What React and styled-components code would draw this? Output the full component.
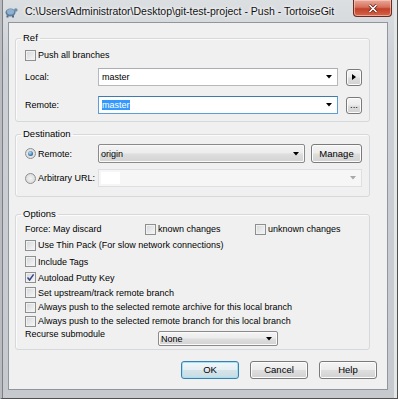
import React from "react";
import styled, { createGlobalStyle } from "styled-components";

const GlobalStyle = createGlobalStyle`
  html, body {
    margin: 0;
    padding: 0;
    background: #ffffff;
  }
  body {
    width: 398px;
    height: 399px;
    overflow: hidden;
  }
`;

const UI_FONT = `"Liberation Sans", Arial, sans-serif`;

const Window = styled.div`
  width: 398px;
  height: 399px;
  box-sizing: border-box;
  display: flex;
  flex-direction: column;
  background: linear-gradient(#dcdfe2, #cdd1d5 60px, #c6cacf);
  border-left: 2px solid #b8bcc0;
  border-right: 1px solid #505050;
  border-bottom: 1px solid #505050;
  box-shadow: inset 1px 0 0 #7d7f82, inset -3px 0 0 #e3e5e7;
  font-family: ${UI_FONT};
  font-size: 9px;
  color: #000;
`;

const TitleBar = styled.div`
  height: 22px;
  flex: none;
  display: flex;
  align-items: flex-start;
`;

const TitleIcon = styled.svg`
  margin: 5px 0 0 2px;
  flex: none;
`;

const TitleText = styled.div`
  margin: 4px 0 0 7px;
  font-size: 10.5px;
  line-height: 14px;
  color: #111;
  white-space: nowrap;
  text-shadow: 0 0 5px #ffffff, 0 0 3px #ffffff;
`;

const CloseButton = styled.div`
  margin-left: auto;
  margin-right: 5px;
  width: 39px;
  height: 17px;
  box-sizing: border-box;
  border: 1px solid #6b2b20;
  border-top: none;
  border-radius: 0 0 4px 4px;
  background: linear-gradient(#e9a99a 0%, #d7705b 45%, #c2402a 55%, #d5664a 100%);
  box-shadow: inset 0 0 0 1px rgba(255, 210, 200, 0.6);
  display: flex;
  align-items: center;
  justify-content: center;
`;

const Client = styled.div`
  flex: 1;
  margin: 0 9px 8px 6px;
  box-sizing: border-box;
  border: 1px solid #8f969c;
  background: #f0f0f0;
  padding: 9px 10px 0 6px;
  display: flex;
  flex-direction: column;
`;

const Group = styled.fieldset`
  margin: ${(p) => p.$mt}px 7px 0 0;
  padding: 0 7px ${(p) => p.$pb}px 9px;
  border: 1px solid #d5d9dc;
  border-radius: 3px;
  box-shadow: inset 1px 1px 0 #fbfbfb;
  min-width: 0;
`;

const Legend = styled.legend`
  padding: 0 2px;
  margin-left: -4px;
  line-height: 12px;
  font-size: 9.5px;
`;

const Row = styled.div`
  display: grid;
  grid-template-columns: ${(p) => p.$cols};
  column-gap: ${(p) => p.$gap || 0}px;
  align-items: center;
  height: ${(p) => p.$h}px;
  margin-top: ${(p) => p.$mt || 0}px;
`;

const FieldLabel = styled.span`
  line-height: 12px;
  white-space: nowrap;
  align-self: ${(p) => (p.$top ? "start" : "center")};
`;

const Option = styled.label`
  display: flex;
  align-items: center;
  gap: 2px;
  line-height: 12px;
  white-space: nowrap;
`;

const CheckBox = styled.span`
  width: 11px;
  height: 11px;
  box-sizing: border-box;
  flex: none;
  border: 1px solid #8e8f8f;
  background: linear-gradient(135deg, #d4d6d8, #f7f7f7);
  box-shadow: inset 0 0 0 1px #f1f1f1;
  display: inline-flex;
  align-items: center;
  justify-content: center;
`;

const RadioDot = styled.span`
  width: 11px;
  height: 11px;
  box-sizing: border-box;
  flex: none;
  border-radius: 50%;
  border: 1px solid #8e8f8f;
  background: radial-gradient(circle at 50% 50%, #f3f3f3, #d3d4d6);
  display: inline-flex;
  align-items: center;
  justify-content: center;

  &::after {
    content: "";
    display: ${(p) => (p.$on ? "block" : "none")};
    width: 5px;
    height: 5px;
    border-radius: 50%;
    background: radial-gradient(circle at 40% 35%, #b9e1f8, #2a6aa3 70%, #1b4a78);
  }
`;

const EditCombo = styled.div`
  height: 100%;
  box-sizing: border-box;
  display: flex;
  align-items: center;
  padding: 0 5px 0 3px;
  border: 1px solid ${(p) => (p.$focus ? "#5b9fd6" : "#b5b8bd")};
  border-top-color: ${(p) => (p.$focus ? "#3d7bad" : "#abadb3")};
  background: #ffffff;
`;

const ComboText = styled.span`
  flex: 1;
  line-height: 12px;
`;

const Selected = styled.span`
  background: #3399ff;
  color: #ffffff;
`;

const DropCombo = styled.div`
  height: ${(p) => (p.$h ? `${p.$h}px` : "100%")};
  align-self: ${(p) => (p.$h ? "end" : "stretch")};
  box-sizing: border-box;
  display: flex;
  align-items: center;
  padding: 0 5px 0 2px;
  border: 1px solid #8a8a8a;
  border-radius: 2px;
  background: linear-gradient(#f4f4f4 0%, #ececec 48%, #dedede 52%, #d3d3d3 100%);
  box-shadow: inset 0 0 0 1px #fafafa;
`;

const DisabledCombo = styled.div`
  height: 100%;
  box-sizing: border-box;
  display: flex;
  align-items: center;
  padding: 0 5px 0 2px;
  border: 1px solid #dcdfe3;
  background: #f6f6f6;
`;

const DisabledEdit = styled.span`
  width: 19px;
  height: 12px;
  background: #ffffff;
  margin-right: auto;
`;

const PushButton = styled.button`
  font: inherit;
  font-size: 9.5px;
  color: #000;
  width: ${(p) => p.$w || 58}px;
  height: ${(p) => p.$h || 18}px;
  padding: 0;
  box-sizing: border-box;
  border: 1px solid ${(p) => (p.$default ? "#3c7fb1" : "#7a7a7a")};
  border-radius: 3px;
  background: ${(p) =>
    p.$default
      ? "linear-gradient(#f1f7fa 0%, #e6eff3 48%, #d6e4ea 52%, #c9dbe3 100%)"
      : "linear-gradient(#f4f4f4 0%, #ececec 48%, #dedede 52%, #d1d1d1 100%)"};
  box-shadow: ${(p) =>
    p.$default ? "inset 0 0 0 1px #9ee2f4" : "inset 0 0 0 1px #fcfcfc"};
  display: flex;
  align-items: center;
  justify-content: center;
  line-height: 12px;
`;

const OptionsGrid = styled.div`
  display: grid;
  grid-template-rows: 16px 16px 17px 15px 15px 14px 14px 18px;
  margin-top: 1px;
`;

const OptionRow = styled.div`
  display: flex;
  align-items: center;
`;

const ButtonRow = styled.div`
  display: flex;
  justify-content: flex-end;
  gap: 11px;
  margin-top: 11px;
`;

const DownArrow = ({ color = "#000" }) => (
  <svg width="6" height="4" viewBox="0 0 6 4">
    <path d="M0 0 H6 L3 3.5 Z" fill={color} />
  </svg>
);

const Check = ({ on }) => (
  <CheckBox>
    {on && (
      <svg width="9" height="9" viewBox="0 0 9 9">
        <path d="M1.5 4.6 L3.6 7 L7.6 1.4" fill="none" stroke="#34468a" strokeWidth="1.5" />
      </svg>
    )}
  </CheckBox>
);

const App = () => {
  return (
    <>
      <GlobalStyle />
      <Window>
        <TitleBar>
          <TitleIcon width="14" height="13" viewBox="0 0 14 13">
            <ellipse cx="6.5" cy="7.5" rx="5" ry="4" fill="#5d7e9e" />
            <ellipse cx="6.5" cy="6.8" rx="3.6" ry="2.8" fill="#8fb0cf" />
            <circle cx="11.8" cy="5" r="1.8" fill="#6c8cab" />
            <rect x="2.5" y="10.5" width="2" height="2" fill="#4d6a88" />
            <rect x="8" y="10.5" width="2" height="2" fill="#4d6a88" />
          </TitleIcon>
          <TitleText>{"C:\\Users\\Administrator\\Desktop\\git-test-project - Push - TortoiseGit"}</TitleText>
          <CloseButton>
            <svg width="10" height="9" viewBox="0 0 10 9">
              <path d="M1.5 1 L8.5 8 M8.5 1 L1.5 8" stroke="#5a1d12" strokeWidth="3" />
              <path d="M1.5 1 L8.5 8 M8.5 1 L1.5 8" stroke="#ffffff" strokeWidth="1.6" />
            </svg>
          </CloseButton>
        </TitleBar>

        <Client>
          <Group $mt={0} $pb={7}>
            <Legend>Ref</Legend>
            <Row $cols="auto" $h={12} $mt={5}>
              <Option>
                <Check />
                Push all branches
              </Option>
            </Row>
            <Row $cols="65px 1fr 16px" $gap={8} $h={18} $mt={7}>
              <FieldLabel>Local:</FieldLabel>
              <EditCombo>
                <ComboText>master</ComboText>
                <DownArrow />
              </EditCombo>
              <PushButton $w={16} $h={17}>
                <svg width="4" height="6" viewBox="0 0 4 6">
                  <path d="M0 0 L4 3 L0 6 Z" fill="#000" />
                </svg>
              </PushButton>
            </Row>
            <Row $cols="65px 1fr 16px" $gap={8} $h={18} $mt={10}>
              <FieldLabel>Remote:</FieldLabel>
              <EditCombo $focus>
                <ComboText>
                  <Selected>master</Selected>
                </ComboText>
                <DownArrow />
              </EditCombo>
              <PushButton $w={16} $h={17}>...</PushButton>
            </Row>
          </Group>

          <Group $mt={6} $pb={9}>
            <Legend>Destination</Legend>
            <Row $cols="67px 1fr 51px" $gap={6} $h={19} $mt={4}>
              <Option>
                <RadioDot $on />
                Remote:
              </Option>
              <DropCombo>
                <ComboText>origin</ComboText>
                <DownArrow />
              </DropCombo>
              <PushButton $w={51} $h={19}>Manage</PushButton>
            </Row>
            <Row $cols="73px 1fr" $h={18} $mt={6}>
              <Option>
                <RadioDot />
                Arbitrary URL:
              </Option>
              <DisabledCombo>
                <DisabledEdit />
                <DownArrow color="#a8a8a8" />
              </DisabledCombo>
            </Row>
          </Group>

          <Group $mt={11} $pb={3}>
            <Legend>Options</Legend>
            <OptionsGrid>
              <Row $cols="120px 110px auto" $h={16}>
                <FieldLabel>Force: May discard</FieldLabel>
                <Option>
                  <Check />
                  known changes
                </Option>
                <Option>
                  <Check />
                  unknown changes
                </Option>
              </Row>
              <OptionRow>
                <Option>
                  <Check />
                  Use Thin Pack (For slow network connections)
                </Option>
              </OptionRow>
              <OptionRow>
                <Option>
                  <Check />
                  Include Tags
                </Option>
              </OptionRow>
              <OptionRow>
                <Option>
                  <Check on />
                  Autoload Putty Key
                </Option>
              </OptionRow>
              <OptionRow>
                <Option>
                  <Check />
                  Set upstream/track remote branch
                </Option>
              </OptionRow>
              <OptionRow>
                <Option>
                  <Check />
                  Always push to the selected remote archive for this local branch
                </Option>
              </OptionRow>
              <OptionRow>
                <Option>
                  <Check />
                  Always push to the selected remote branch for this local branch
                </Option>
              </OptionRow>
              <Row $cols="133px 120px" $h={18}>
                <FieldLabel $top>Recurse submodule</FieldLabel>
                <DropCombo $h={15}>
                  <ComboText>None</ComboText>
                  <DownArrow />
                </DropCombo>
              </Row>
            </OptionsGrid>
          </Group>

          <ButtonRow>
            <PushButton $default>OK</PushButton>
            <PushButton>Cancel</PushButton>
            <PushButton>Help</PushButton>
          </ButtonRow>
        </Client>
      </Window>
    </>
  );
};

export default App;
